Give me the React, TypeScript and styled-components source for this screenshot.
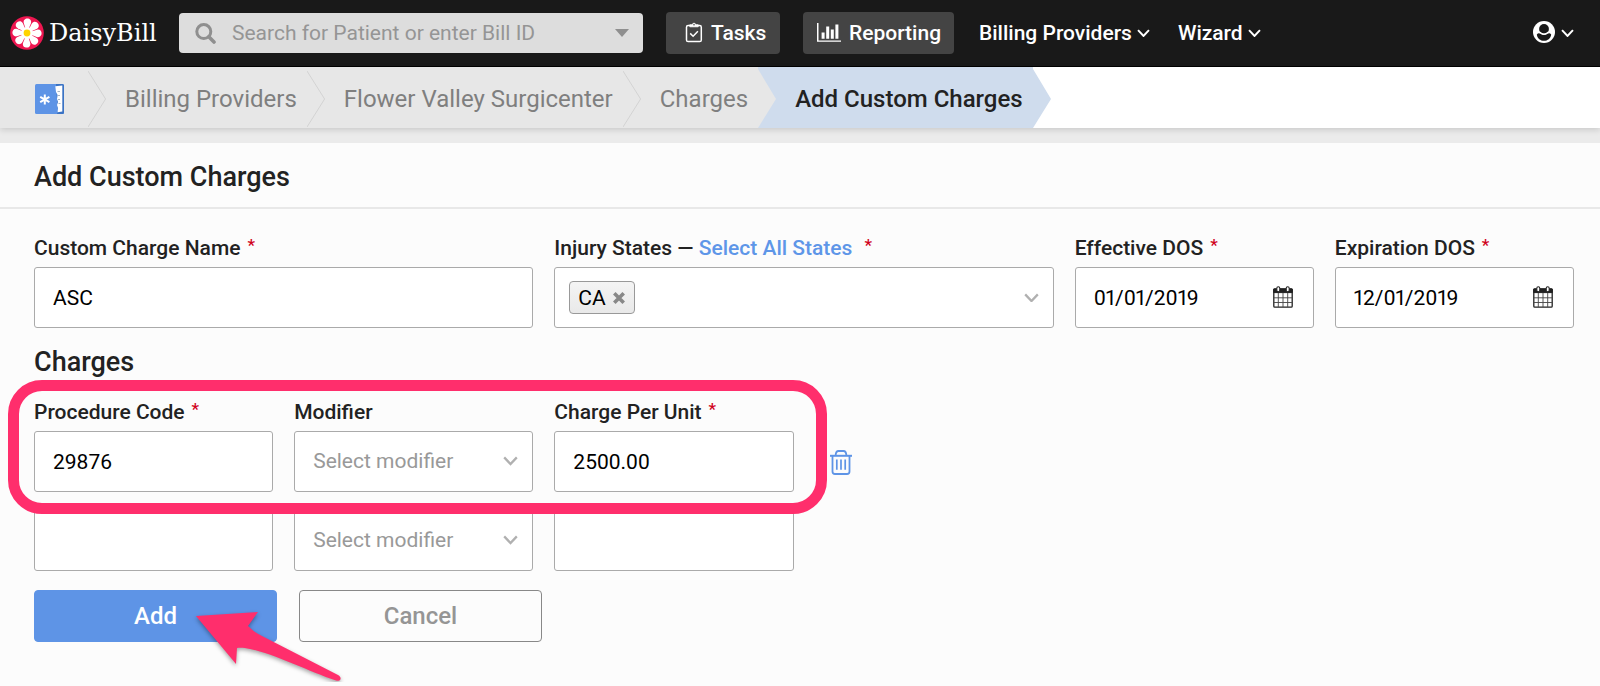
import React from "react";
import styled, { createGlobalStyle, css } from "styled-components";

const GlobalStyle = createGlobalStyle`
  *, *::before, *::after { box-sizing: border-box; }
  body {
    margin: 0;
    background: #fcfcfc;
    color: #222;
    font-family: Roboto, "Liberation Sans", sans-serif;
    font-size: 21px;
  }
  button, input, select { font: inherit; color: inherit; }
  h1, h2, ol { margin: 0; padding: 0; }
`;

const TopBar = styled.header`
  display: flex;
  align-items: center;
  height: 67px;
  padding: 0 26px 0 10px;
  background: #191919;
  border-bottom: 1px solid #000;
  color: #fff;
`;

const Logo = styled.a`
  display: flex;
  align-items: center;
  gap: 5px;
  width: 169px;
  color: #fff;
  font: 24px/34px "DejaVu Serif", serif;
  text-decoration: none;
`;

const SearchBox = styled.div`
  display: flex;
  align-items: center;
  width: 464px;
  height: 40px;
  margin-right: 23px;
  padding: 0 14px 0 16px;
  background: #ddd;
  border-radius: 4px;
  color: #909090;
`;

const SearchInput = styled.input`
  flex: 1;
  min-width: 0;
  margin-left: 16px;
  padding: 0;
  border: 0;
  outline: 0;
  background: transparent;
  &::placeholder { color: #959595; opacity: 1; }
`;

const IconButton = styled.button`
  display: flex;
  flex: none;
  padding: 0;
  border: 0;
  background: transparent;
  cursor: pointer;
`;

const TopButton = styled.button<{ $width: number; $inset: number }>`
  display: flex;
  align-items: center;
  gap: 8px;
  width: ${(p) => p.$width}px;
  height: 42px;
  margin-right: 23px;
  padding: 0 0 0 ${(p) => p.$inset}px;
  border: 0;
  border-radius: 4px;
  background: #444;
  font-weight: 500;
`;

const TopMenu = styled.button`
  display: flex;
  align-items: center;
  gap: 5px;
  margin-left: 2px;
  margin-right: 26px;
  padding: 0;
  border: 0;
  background: transparent;
  font-weight: 500;
  white-space: nowrap;
`;

const AccountMenu = styled(TopMenu)`
  gap: 6px;
  margin-left: auto;
  margin-right: 0;
`;

const CrumbNav = styled.nav`
  position: relative;
  height: 61px;
  background: #fff;
  box-shadow: 0 2px 6px rgba(0, 0, 0, 0.14);
`;

const CrumbList = styled.ol`
  display: flex;
  height: 61px;
  list-style: none;
`;

const Crumb = styled.li<{ $active?: boolean }>`
  display: flex;
  align-items: center;
  position: relative;
  padding: 3px 10px 0 37px;
  background: ${(p) => (p.$active ? "#cfdced" : "#e7e7e7")};
  font-size: 24px;
  white-space: nowrap;
  ${(p) => p.$active && css`font-weight: 500;`}
  &:first-child { padding: 2px 24px 0 35px; }
`;

const CrumbLink = styled.a`
  display: flex;
  color: #7f7f7f;
  text-decoration: none;
`;

const CrumbTip = styled.svg`
  position: absolute;
  left: 100%;
  top: 0;
  z-index: 1;
  display: block;
`;

const Panel = styled.main`
  border-top: 15px solid #ebebeb;
`;

const PanelHeader = styled.div`
  padding: 4px 34px 0;
  border-bottom: 2px solid #e8e8e8;
`;

const PageTitle = styled.h1`
  font-size: 27px;
  font-weight: 500;
  line-height: 60px;
`;

const Form = styled.form`
  padding: 27px 26px 40px 34px;
`;

const Grid = styled.div`
  position: relative;
  display: grid;
  grid-template-columns: repeat(6, 1fr);
  column-gap: 21px;
`;

const Field = styled.div<{ $span?: number }>`
  grid-column: span ${(p) => p.$span ?? 1};
  min-width: 0;
`;

const LabelRow = styled.div`
  height: 31px;
  color: #222;
  font-weight: 500;
  line-height: 24px;
  white-space: nowrap;
`;

const Star = styled.span`
  margin-left: 7px;
  color: #d0021b;
  font-size: 17px;
  line-height: 18px;
  vertical-align: 4px;
`;

const SelectAll = styled.a`
  color: #5e96e8;
  text-decoration: none;
  & + ${Star} { margin-left: 12px; }
`;

const control = css`
  width: 100%;
  height: 61px;
  border: 1px solid #aaa;
  border-radius: 3px;
  background: #fff;
`;

const TextInput = styled.input`
  ${control}
  display: block;
  padding: 0 18px;
  color: #000;
`;

const ControlBox = styled.div<{ $tokens?: boolean }>`
  ${control}
  display: flex;
  align-items: center;
  padding: ${(p) => (p.$tokens ? "0 14px" : "0 20px 0 18px")};
  color: #000;
`;

const BareInput = styled.input`
  flex: 1;
  min-width: 0;
  padding: 0;
  border: 0;
  outline: 0;
  background: transparent;
  font-variant-numeric: proportional-nums;
`;

const Token = styled.span`
  display: flex;
  align-items: center;
  gap: 7px;
  height: 33px;
  padding: 0 9px 0 8px;
  border: 1px solid #999;
  border-radius: 4px;
  background: linear-gradient(#f4f4f4, #e9e9e9);
`;

const SelectWrap = styled.div`
  position: relative;
`;

const Select = styled.select`
  ${control}
  display: block;
  appearance: none;
  padding: 0 40px 2px 18px;
  color: #999;
`;

const SelectArrow = styled.span`
  position: absolute;
  right: 15px;
  top: 25px;
  display: flex;
  pointer-events: none;
`;

const SectionTitle = styled.h2`
  margin: 19px 0 23px;
  font-size: 27px;
  font-weight: 500;
  line-height: 30px;
`;

const TrashCell = styled.div`
  display: flex;
  align-items: flex-end;
  padding: 0 0 17px 15px;
`;

const Highlight = styled.div`
  position: absolute;
  grid-column: 1 / 4;
  inset: -20px -33px -22px -26px;
  border: 11px solid #ff2e6c;
  border-radius: 34px;
  pointer-events: none;
`;

const SecondRow = styled(Grid)`
  z-index: -1;
  margin-top: 18px;
`;

const Actions = styled.div`
  position: relative;
  display: flex;
  gap: 22px;
  margin-top: 19px;
`;

const ActionButton = styled.button<{ $primary?: boolean }>`
  width: 243px;
  height: 52px;
  padding: 0;
  border: 1px solid ${(p) => (p.$primary ? "#5e94e6" : "#888")};
  border-radius: 4px;
  background: ${(p) => (p.$primary ? "#5e94e6" : "#fcfcfc")};
  color: ${(p) => (p.$primary ? "#fff" : "#959595")};
  font-size: 24px;
  font-weight: 500;
`;

const Pointer = styled.svg`
  position: absolute;
  left: 156px;
  top: 14px;
  overflow: visible;
  pointer-events: none;
  filter: drop-shadow(0 2px 2px rgba(0, 0, 0, 0.35));
`;

const Chevron = ({ color = "#fff", width = 13, stroke = 2 }) => (
  <svg width={width} height={width * 0.65} viewBox="0 0 13 8.5" fill="none" stroke={color} strokeWidth={stroke}>
    <path d="M1 1.2 6.5 7 12 1.2" />
  </svg>
);

const Daisy = () => (
  <svg width="34" height="34" viewBox="0 0 34 34">
    <circle cx="17" cy="17" r="16.8" fill="#ee1650" />
    {Array.from({ length: 8 }, (_, i) => (
      <path
        key={i}
        d="M17 17 13.400 7.200C11.800.8 22.200.8 20.600 7.200Z"
        fill="#fff"
        transform={`rotate(${i * 45 + 2} 17 17)`}
      />
    ))}
    <circle cx="17" cy="17" r="6" fill="#fff" />
    <circle cx="17" cy="17" r="3.4" fill="#ffd400" />
  </svg>
);

const SearchIcon = () => (
  <svg width="21" height="21" viewBox="0 0 21 21" fill="none" stroke="#8f8f8f" strokeWidth="3">
    <circle cx="8.8" cy="8.6" r="7" />
    <path d="m13.8 13.8 5.2 5.2" strokeWidth="3.6" strokeLinecap="round" />
  </svg>
);

const TasksIcon = () => (
  <svg width="18" height="23" viewBox="0 0 18 23" fill="none" stroke="#fff" strokeWidth="1.500">
    <rect x="1.5" y="3.600" width="14.800" height="16" rx="1.600" />
    <path d="M4.800 4.800V2.800h2.600a1.600 1.600 0 0 1 3.200 0h2.600v2Z" fill="#fff" strokeWidth=".8" />
    <circle cx="9" cy="2.700" r=".8" fill="#444" stroke="none" />
    <path d="m5.200 11.400 2.900 2.900 4.800-5" />
  </svg>
);

const ChartIcon = () => (
  <svg width="24" height="21" viewBox="0 0 24 21" fill="#fff">
    <path d="M0 0h1.500v17.400H24V18.800H0ZM4.600 9.500h3v6.300h-3ZM9.200 3.400h3v12.400h-3ZM13.800 6.400h3v9.400h-3ZM18.400 1.400h3v14.400h-3Z" />
  </svg>
);

const UserIcon = () => (
  <svg width="22" height="24" viewBox="0 0 22 24">
    <circle cx="11" cy="11" r="11" fill="#fff" />
    <path d="M3.800 13.400C5 11.900 6.200 12 7.600 12.700a5.400 5.400 0 0 0 6.800 0c1.400-.7 2.600-.8 3.800.7-.6 4-3.500 6.300-7.200 6.300s-6.600-2.300-7.200-6.300Z" fill="#191919" />
    <circle cx="11" cy="7.900" r="4.900" fill="#191919" />
    <path d="M6.900 11.200a5.200 5.200 0 0 0 8.200 0" fill="none" stroke="#fff" strokeWidth="1.300" />
  </svg>
);

const ProviderIcon = () => (
  <svg width="29" height="30" viewBox="0 0 29 30">
    <rect width="29" height="30" rx="1.500" fill="#5e94e6" />
    <path d="M21 0h6.500A1.500 1.500 0 0 1 29 1.500v27a1.500 1.500 0 0 1-1.500 1.500H22l1-3-2-24Z" fill="#3b73c4" />
    <path d="M20.300 2.200 27.300 1.500v26L22.600 28.200 23 24l-1-3 1-3-1-3 .6-4-1.600-3Z" fill="#fff" />
    <path d="M22.500 7.500h2.500M23 11.500h2M23 15.500h2M23.500 19.500h2" stroke="#a9b4c4" />
    <path d="M9.800 10.500v10M5.200 12.800l9.200 5.400M14.400 12.800l-9.200 5.400" stroke="#fff" strokeWidth="2" />
  </svg>
);

const CalendarIcon = () => (
  <svg width="20" height="23" viewBox="0 0 20 23" fill="none" stroke="#222">
    <path d="M.7 3h18.600v3.600H.7Z" fill="#222" />
    <rect x=".8" y="3" width="18.400" height="18.200" rx="1" strokeWidth="1.300" />
    <path d="M5.300 7v14M10 7v14M14.700 7v14M1 11.800h18M1 16.500h18" strokeWidth=".9" stroke="#444" />
    <rect x="3.800" y=".7" width="3" height="5" rx="1.500" fill="#fff" strokeWidth="1.100" />
    <rect x="13.200" y=".7" width="3" height="5" rx="1.500" fill="#fff" strokeWidth="1.100" />
  </svg>
);

const TrashIcon = () => (
  <svg width="22" height="25" viewBox="0 0 22 25" fill="none" stroke="#5e94e6" strokeWidth="1.800">
    <path d="M0 5.800h22" strokeWidth="2" />
    <path d="M5.600 5.500C5.800 2 7 1 8.500 1h5c1.500 0 2.700 1 2.900 4.500M2.500 6v15.500A2.500 2.500 0 0 0 5 24h12a2.500 2.500 0 0 0 2.500-2.500V6" />
    <path d="M6.800 9.500v10.300M11 9.500v10.300M15.200 9.500v10.300" strokeWidth="1.700" />
  </svg>
);

const Tip = ({ next }: { next: "same" | "active" | "last" }) => (
  <CrumbTip width="19" height="61" viewBox="0 0 19 61">
    <path d="M0 0v61l18-29L0 2Z" fill={next === "last" ? "#cfdced" : "#e7e7e7"} />
    {next === "same" && <path d="M0 4 17.600 32 0 60" fill="none" stroke="#d3d3d3" />}
  </CrumbTip>
);

const Required = () => <Star aria-hidden="true">*</Star>;

const DateField = ({ id, label, value }: { id: string; label: string; value: string }) => (
  <Field>
    <LabelRow><label htmlFor={id}>{label}</label><Required /></LabelRow>
    <ControlBox>
      <BareInput id={id} defaultValue={value} />
      <IconButton type="button" aria-label={`Choose ${label}`}><CalendarIcon /></IconButton>
    </ControlBox>
  </Field>
);

const ModifierSelect = ({ id, label }: { id?: string; label?: string }) => (
  <SelectWrap>
    <Select id={id} aria-label={label}><option>Select modifier</option></Select>
    <SelectArrow><Chevron color="#b0b0b0" width={15} stroke={2} /></SelectArrow>
  </SelectWrap>
);

export default function App() {
  return (
    <>
      <GlobalStyle />
      <TopBar>
        <Logo href="#"><Daisy />DaisyBill</Logo>
        <SearchBox>
          <SearchIcon />
          <SearchInput aria-label="Search" placeholder="Search for Patient or enter Bill ID" />
          <IconButton type="button" aria-label="Search options">
            <svg width="14" height="8" viewBox="0 0 14 8"><path d="M0 0h14L7 8Z" fill="#8f8f8f" /></svg>
          </IconButton>
        </SearchBox>
        <TopButton $width={114} $inset={19}><TasksIcon />Tasks</TopButton>
        <TopButton $width={151} $inset={14}><ChartIcon />Reporting</TopButton>
        <TopMenu>Billing Providers<Chevron /></TopMenu>
        <TopMenu>Wizard<Chevron /></TopMenu>
        <AccountMenu aria-label="Account"><UserIcon /><Chevron /></AccountMenu>
      </TopBar>
      <CrumbNav aria-label="Breadcrumb">
        <CrumbList>
          <Crumb><CrumbLink href="#" aria-label="Home"><ProviderIcon /></CrumbLink><Tip next="same" /></Crumb>
          <Crumb><CrumbLink href="#">Billing Providers</CrumbLink><Tip next="same" /></Crumb>
          <Crumb><CrumbLink href="#">Flower Valley Surgicenter</CrumbLink><Tip next="same" /></Crumb>
          <Crumb><CrumbLink href="#">Charges</CrumbLink><Tip next="active" /></Crumb>
          <Crumb $active aria-current="page">Add Custom Charges<Tip next="last" /></Crumb>
        </CrumbList>
      </CrumbNav>
      <Panel>
        <PanelHeader><PageTitle>Add Custom Charges</PageTitle></PanelHeader>
        <Form onSubmit={(e) => e.preventDefault()}>
          <Grid>
            <Field $span={2}>
              <LabelRow><label htmlFor="name">Custom Charge Name</label><Required /></LabelRow>
              <TextInput id="name" defaultValue="ASC" />
            </Field>
            <Field $span={2}>
              <LabelRow>
                <label htmlFor="states">Injury States</label> — <SelectAll href="#">Select All States</SelectAll><Required />
              </LabelRow>
              <ControlBox $tokens>
                <Token>
                  CA
                  <IconButton type="button" aria-label="Remove CA">
                    <svg width="12" height="12" viewBox="0 0 12 12" stroke="#888" strokeWidth="3.600"><path d="m1.300 1.300 9.400 9.400M10.700 1.300l-9.400 9.400" /></svg>
                  </IconButton>
                </Token>
                <BareInput id="states" />
                <Chevron color="#b0b0b0" width={15} stroke={2} />
              </ControlBox>
            </Field>
            <DateField id="effective" label="Effective DOS" value="01/01/2019" />
            <DateField id="expiration" label="Expiration DOS" value="12/01/2019" />
          </Grid>
          <SectionTitle>Charges</SectionTitle>
          <Grid>
            <Field>
              <LabelRow><label htmlFor="code">Procedure Code</label><Required /></LabelRow>
              <TextInput id="code" defaultValue="29876" />
            </Field>
            <Field>
              <LabelRow><label htmlFor="modifier">Modifier</label></LabelRow>
              <ModifierSelect id="modifier" />
            </Field>
            <Field>
              <LabelRow><label htmlFor="charge">Charge Per Unit</label><Required /></LabelRow>
              <TextInput id="charge" defaultValue="2500.00" />
            </Field>
            <TrashCell><IconButton type="button" aria-label="Delete charge"><TrashIcon /></IconButton></TrashCell>
            <Highlight />
          </Grid>
          <SecondRow>
            <TextInput aria-label="Procedure Code, row 2" />
            <ModifierSelect label="Modifier, row 2" />
            <TextInput aria-label="Charge Per Unit, row 2" />
          </SecondRow>
          <Actions>
            <ActionButton $primary type="submit">Add</ActionButton>
            <ActionButton type="button">Cancel</ActionButton>
            <Pointer width="146" height="70" viewBox="0 0 146 70">
              <path d="M6 12 68 8 58 22C62 26 66 29 72 32L148 71C153 74 150 78 146 76.500 120 68 85 50 60 45 54 43.500 50 43.500 47 44L46 60Z" fill="#ff2e6c" />
            </Pointer>
          </Actions>
        </Form>
      </Panel>
    </>
  );
}
